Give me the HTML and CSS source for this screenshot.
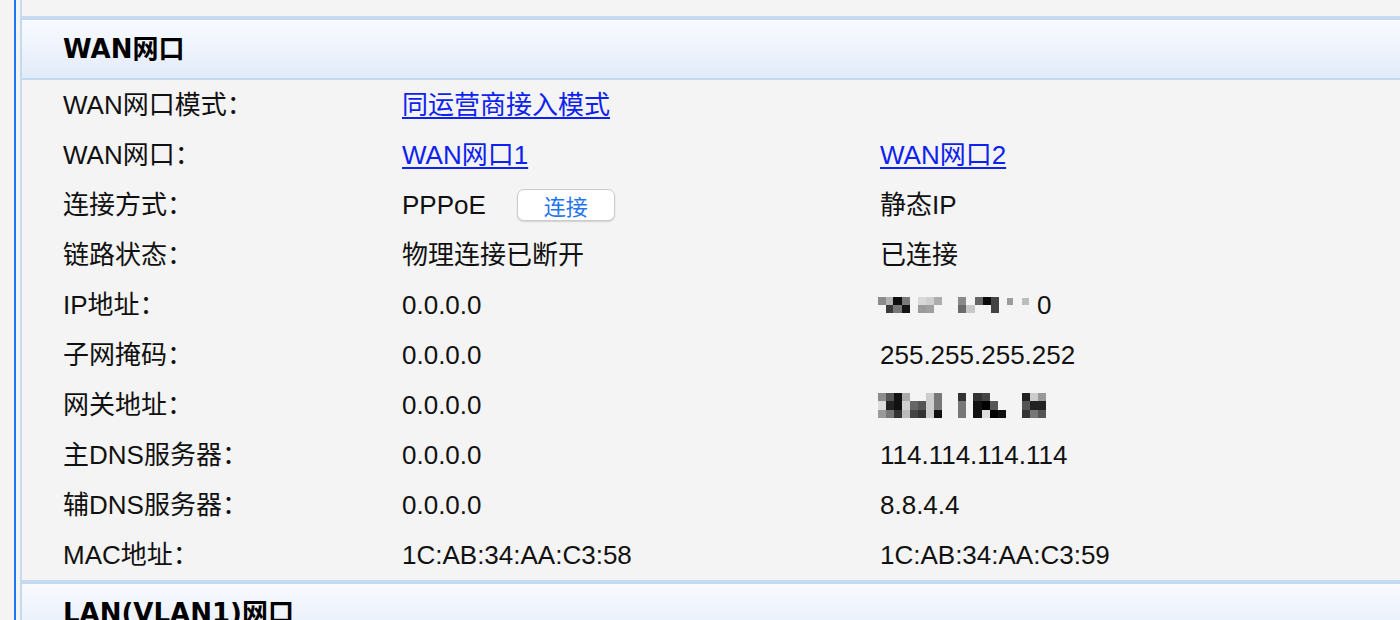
FILE: index.html
```html
<!DOCTYPE html>
<html lang="zh-CN">
<head>
<meta charset="utf-8">
<title>WAN网口</title>
<link rel="stylesheet" href="styles.css">
</head>
<body>
<div class="frame">
  <div class="rail">
    <div class="panel">
      <div class="prev-row"></div>
      <section class="sec">
        <div class="sec-head">WAN网口</div>
        <div class="row">
          <div class="lbl">WAN网口模式：</div>
          <div class="val"><a href="#" class="lnk">同运营商接入模式</a></div>
          <div class="val"></div>
        </div>
        <div class="row">
          <div class="lbl">WAN网口：</div>
          <div class="val"><a href="#" class="lnk">WAN网口1</a></div>
          <div class="val"><a href="#" class="lnk">WAN网口2</a></div>
        </div>
        <div class="row">
          <div class="lbl">连接方式：</div>
          <div class="val"><span>PPPoE</span><button class="btn" type="button">连接</button></div>
          <div class="val">静态IP</div>
        </div>
        <div class="row">
          <div class="lbl">链路状态：</div>
          <div class="val">物理连接已断开</div>
          <div class="val">已连接</div>
        </div>
        <div class="row">
          <div class="lbl">IP地址：</div>
          <div class="val">0.0.0.0</div>
          <div class="val">
            <svg class="blur ip" width="160" height="16" viewBox="0 0 160 16" aria-hidden="true">
              <rect x="0" y="0" width="8" height="8" fill="#8c8c8c"/>
              <rect x="8" y="0" width="7" height="8" fill="#b3b3b3"/>
              <rect x="8" y="8" width="7" height="8" fill="#3a3a3a"/>
              <rect x="15" y="0" width="9" height="8" fill="#0e0e0e"/>
              <rect x="15" y="8" width="9" height="8" fill="#777"/>
              <rect x="24" y="0" width="8" height="8" fill="#7a7a7a"/>
              <rect x="24" y="8" width="8" height="8" fill="#141414"/>
              <rect x="40" y="0" width="8" height="8" fill="#d8d8d8"/>
              <rect x="40" y="8" width="8" height="8" fill="#9a9a9a"/>
              <rect x="48" y="0" width="8" height="8" fill="#cfcfcf"/>
              <rect x="48" y="8" width="8" height="8" fill="#a0a0a0"/>
              <rect x="56" y="0" width="8" height="8" fill="#adadad"/>
              <rect x="80" y="0" width="8" height="16" fill="#6a6a6a"/>
              <rect x="80" y="0" width="8" height="8" fill="#8a8a8a"/>
              <rect x="88" y="8" width="9" height="8" fill="#c8c8c8"/>
              <rect x="97" y="0" width="8" height="8" fill="#666"/>
              <rect x="105" y="0" width="8" height="8" fill="#0a0a0a"/>
              <rect x="113" y="0" width="8" height="16" fill="#444"/>
              <rect x="129" y="1" width="6" height="7" fill="#9c9c9c"/>
              <rect x="144" y="1" width="7" height="7" fill="#bdbdbd"/>
            </svg><span>0</span>
          </div>
        </div>
        <div class="row">
          <div class="lbl">子网掩码：</div>
          <div class="val">0.0.0.0</div>
          <div class="val">255.255.255.252</div>
        </div>
        <div class="row">
          <div class="lbl">网关地址：</div>
          <div class="val">0.0.0.0</div>
          <div class="val">
            <svg class="blur gw" width="170" height="25" viewBox="0 0 170 25" aria-hidden="true">
              <rect x="0" y="0" width="8" height="8" fill="#8c8c8c"/>
              <rect x="0" y="8" width="8" height="9" fill="#dcdcdc"/>
              <rect x="0" y="17" width="8" height="8" fill="#9a9a9a"/>
              <rect x="8" y="0" width="8" height="8" fill="#555"/>
              <rect x="8" y="8" width="8" height="9" fill="#222"/>
              <rect x="8" y="17" width="8" height="8" fill="#777"/>
              <rect x="16" y="0" width="8" height="17" fill="#111"/>
              <rect x="16" y="17" width="8" height="8" fill="#333"/>
              <rect x="24" y="0" width="8" height="8" fill="#aaa"/>
              <rect x="24" y="8" width="8" height="9" fill="#cfcfcf"/>
              <rect x="24" y="17" width="8" height="8" fill="#bbb"/>
              <rect x="32" y="8" width="8" height="9" fill="#666"/>
              <rect x="32" y="17" width="8" height="8" fill="#444"/>
              <rect x="40" y="8" width="8" height="9" fill="#555"/>
              <rect x="40" y="17" width="8" height="8" fill="#333"/>
              <rect x="48" y="0" width="8" height="25" fill="#cdcdcd"/>
              <rect x="56" y="0" width="8" height="17" fill="#777"/>
              <rect x="56" y="17" width="8" height="8" fill="#111"/>
              <rect x="80" y="0" width="8" height="8" fill="#333"/>
              <rect x="80" y="8" width="8" height="17" fill="#777"/>
              <rect x="95" y="0" width="9" height="8" fill="#333"/>
              <rect x="95" y="8" width="9" height="17" fill="#111"/>
              <rect x="104" y="0" width="8" height="8" fill="#444"/>
              <rect x="104" y="8" width="8" height="9" fill="#000"/>
              <rect x="104" y="17" width="8" height="8" fill="#ddd"/>
              <rect x="112" y="8" width="8" height="9" fill="#555"/>
              <rect x="112" y="17" width="8" height="8" fill="#000"/>
              <rect x="120" y="17" width="8" height="8" fill="#111"/>
              <rect x="144" y="0" width="8" height="8" fill="#222"/>
              <rect x="144" y="8" width="8" height="9" fill="#555"/>
              <rect x="144" y="17" width="8" height="8" fill="#333"/>
              <rect x="152" y="0" width="8" height="8" fill="#ccc"/>
              <rect x="152" y="8" width="8" height="9" fill="#222"/>
              <rect x="152" y="17" width="8" height="8" fill="#777"/>
              <rect x="160" y="0" width="8" height="8" fill="#999"/>
              <rect x="160" y="8" width="8" height="9" fill="#222"/>
              <rect x="160" y="17" width="8" height="8" fill="#555"/>
            </svg>
          </div>
        </div>
        <div class="row">
          <div class="lbl">主DNS服务器：</div>
          <div class="val">0.0.0.0</div>
          <div class="val">114.114.114.114</div>
        </div>
        <div class="row">
          <div class="lbl">辅DNS服务器：</div>
          <div class="val">0.0.0.0</div>
          <div class="val">8.8.4.4</div>
        </div>
        <div class="row">
          <div class="lbl">MAC地址：</div>
          <div class="val">1C:AB:34:AA:C3:58</div>
          <div class="val">1C:AB:34:AA:C3:59</div>
        </div>
      </section>
      <section class="sec">
        <div class="sec-head">LAN(VLAN1)网口</div>
        <div class="row">
          <div class="lbl">IP地址：</div>
          <div class="val"></div>
          <div class="val"></div>
        </div>
      </section>
    </div>
  </div>
</div>
</body>
</html>
```
FILE: styles.css
```css
html, body {
  margin: 0;
  padding: 0;
  height: 100%;
  overflow: hidden;
  background: #f4f4f4;
}
body {
  font-family: "Liberation Sans", "Noto Sans CJK SC", sans-serif;
  font-size: 26px;
  color: #111;
}
.frame {
  padding-left: 14px;
  height: 100%;
}
.rail {
  border-left: 2px solid #1b78f3;
  padding-left: 4px;
  height: 100%;
}
.panel {
  border-left: 2px solid #c6daef;
  height: 100%;
}
.prev-row {
  height: 16px;
}
.sec {
  border-top: 4px solid #c6daef;
}
.sec-head {
  height: 58px;
  line-height: 58px;
  padding-left: 41px;
  font-family: "DejaVu Sans", "Noto Sans CJK SC", sans-serif;
  font-weight: bold;
  font-size: 26px;
  color: #000;
  border-bottom: 2px solid #c6daef;
  background: linear-gradient(180deg, #f8faff 0%, #eef3fc 50%, #e1ebf9 100%);
}
.row {
  display: grid;
  grid-template-columns: 339px 478px 1fr;
  height: 50px;
  line-height: 50px;
  padding-left: 41px;
  align-items: center;
}
.lbl, .val {
  white-space: nowrap;
  display: flex;
  align-items: center;
  height: 50px;
}
.lnk {
  color: #0d22ee;
  text-decoration: underline;
  text-decoration-thickness: 2px;
  text-underline-offset: 3px;
}
.btn {
  margin-left: 31px;
  width: 98px;
  height: 32px;
  padding: 0;
  border: 1px solid #cbcbcb;
  border-radius: 7px;
  background: #fff;
  box-shadow: 0 1px 1.5px rgba(0, 0, 0, 0.14);
  color: #1f74f0;
  font-family: "Noto Sans CJK SC", sans-serif;
  font-size: 22px;
  line-height: 30px;
}
.blur {
  display: block;
  flex: none;
}
.blur.ip {
  margin-left: -2px;
  margin-right: -1px;
}
.blur.gw {
  margin-left: -2px;
}
```
